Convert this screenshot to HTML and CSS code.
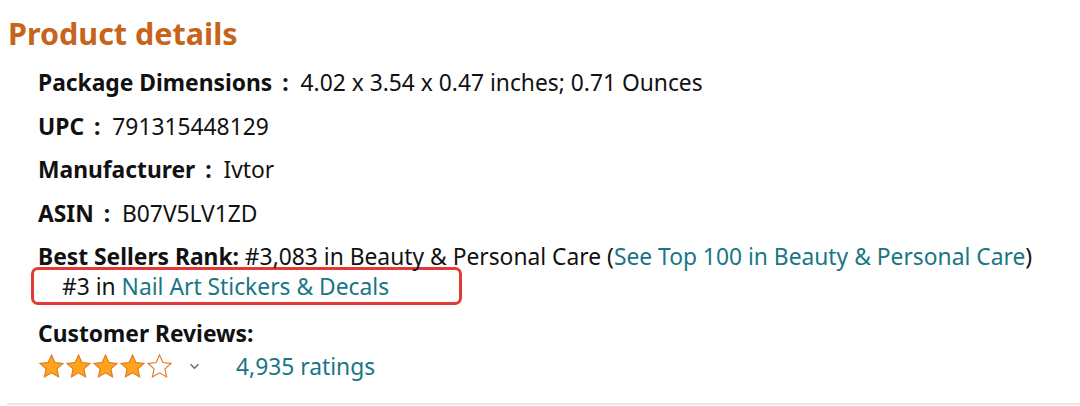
FILE: index.html
```html
<!DOCTYPE html>
<html>
<head>
<meta charset="utf-8">
<link rel="stylesheet" href="styles.css">
</head>
<body>
<div class="page">
  <h2 class="title">Product details</h2>
  <ul class="details">
    <li><span class="label">Package Dimensions <span class="colon">:</span></span> 4.02 x 3.54 x 0.47 inches; 0.71 Ounces</li>
    <li><span class="label">UPC <span class="colon">:</span></span> 791315448129</li>
    <li><span class="label">Manufacturer <span class="colon">:</span></span> Ivtor</li>
    <li><span class="label">ASIN <span class="colon">:</span></span> B07V5LV1ZD</li>
    <li class="rank">
      <div><span class="label">Best Sellers Rank:</span> #3,083 in Beauty &amp; Personal Care (<a class="link">See Top 100 in Beauty &amp; Personal Care</a>)</div>
      <div class="sub-rank">#3 in <a class="link">Nail Art Stickers &amp; Decals</a></div>
    </li>
    <li class="reviews">
      <div class="label">Customer Reviews:</div>
      <div class="rating-row">
        <span class="stars">
          <svg class="star" viewBox="0 0 24 24"><polygon points="12,1.8 15,8.4 22.2,9.2 16.8,14.1 18.3,21.3 12,17.6 5.7,21.3 7.2,14.1 1.8,9.2 9,8.4"/></svg>
          <svg class="star" viewBox="0 0 24 24"><polygon points="12,1.8 15,8.4 22.2,9.2 16.8,14.1 18.3,21.3 12,17.6 5.7,21.3 7.2,14.1 1.8,9.2 9,8.4"/></svg>
          <svg class="star" viewBox="0 0 24 24"><polygon points="12,1.8 15,8.4 22.2,9.2 16.8,14.1 18.3,21.3 12,17.6 5.7,21.3 7.2,14.1 1.8,9.2 9,8.4"/></svg>
          <svg class="star" viewBox="0 0 24 24"><polygon points="12,1.8 15,8.4 22.2,9.2 16.8,14.1 18.3,21.3 12,17.6 5.7,21.3 7.2,14.1 1.8,9.2 9,8.4"/></svg>
          <svg class="star empty" viewBox="0 0 24 24"><polygon points="12,1.8 15,8.4 22.2,9.2 16.8,14.1 18.3,21.3 12,17.6 5.7,21.3 7.2,14.1 1.8,9.2 9,8.4"/></svg>
        </span>
        <svg class="chevron" viewBox="0 0 12 8"><polyline points="1.5,1.5 6,6 10.5,1.5"/></svg>
        <a class="link ratings">4,935 ratings</a>
      </div>
    </li>
  </ul>
  <div class="divider"></div>
</div>
</body>
</html>
```

FILE: styles.css
```css
* { box-sizing: border-box; }
html, body { margin: 0; padding: 0; background: #ffffff; }
body {
  font-family: "Noto Sans", "Open Sans", sans-serif;
  color: #111111;
  width: 1080px;
  height: 406px;
  overflow: hidden;
}
.page { padding: 18px 0 0 8px; }
.title {
  margin: 0;
  font-size: 30.5px;
  line-height: 30px;
  font-weight: 700;
  color: #c6641b;
}
.details {
  list-style: none;
  margin: 20px 0 0 0;
  padding: 0 0 0 30px;
  display: flex;
  flex-direction: column;
  gap: 13.5px;
  font-size: 22.8px;
  line-height: 30px;
}
.label { font-weight: 700; }
.colon { margin: 0 6px 0 4px; }
.link { color: #187686; text-decoration: none; }
.sub-rank {
  margin: -5px 0 0 -7px;
  width: 431px;
  height: 38px;
  border: 3px solid #e53935;
  border-radius: 7px;
  padding: 2px 0 0 28px;
}
.rating-row {
  display: flex;
  align-items: center;
  margin-top: 3px;
  height: 30px;
}
.stars { display: flex; gap: 0; }
.star { width: 27px; height: 27px; fill: #ffa41c; stroke: #de7921; stroke-width: 1; }
.star.empty { fill: #ffffff; }
.chevron {
  width: 11px; height: 7px;
  margin-left: 16px;
  fill: none; stroke: #666666; stroke-width: 1.5;
}
.ratings { margin-left: 36px; }
.divider {
  margin: 21px 0 0 -1px;
  height: 2px;
  background: #e7e7e7;
}
```
